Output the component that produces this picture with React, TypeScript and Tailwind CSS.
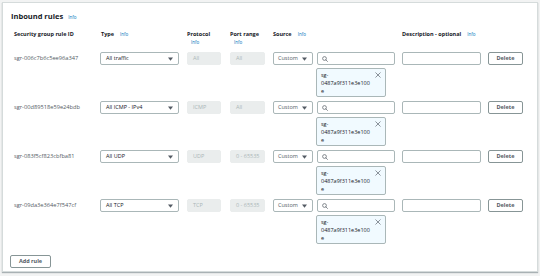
import React from 'react';

const rules = [
  { id: 'sgr-006c7b6c5ee96a347', type: 'All traffic', protocol: 'All', port: 'All' },
  { id: 'sgr-00d89518e59e24bdb', type: 'All ICMP - IPv4', protocol: 'ICMP', port: 'All' },
  { id: 'sgr-083f5cf823cbfba81', type: 'All UDP', protocol: 'UDP', port: '0 - 65535' },
  { id: 'sgr-09da3e364e7f547cf', type: 'All TCP', protocol: 'TCP', port: '0 - 65535' },
];

function Info() {
  return <span className="text-[4.5px] text-[#0073bb] font-normal">Info</span>;
}

function Caret() {
  return (
    <svg width="5" height="4" viewBox="0 0 5 4" className="shrink-0">
      <path d="M0 0.5h5L2.5 3.8z" fill="#545b64" />
    </svg>
  );
}

function SearchIcon() {
  return (
    <svg width="6" height="6" viewBox="0 0 12 12" className="shrink-0">
      <circle cx="5" cy="5" r="3.8" fill="none" stroke="#545b64" strokeWidth="1.4" />
      <path d="M7.8 7.8l3.2 3.2" stroke="#545b64" strokeWidth="1.4" strokeLinecap="round" />
    </svg>
  );
}

function CloseIcon() {
  return (
    <svg width="6" height="6" viewBox="0 0 12 12" className="shrink-0">
      <path d="M1.5 1.5l9 9M10.5 1.5l-9 9" stroke="#545b64" strokeWidth="1.3" strokeLinecap="round" />
    </svg>
  );
}

function Row({ id, type, protocol, port }: { id: string; type: string; protocol: string; port: string }) {
  return (
    <div className="flex items-start h-[49px]">
      <div className="w-[86px] pt-[2px] text-[5.7px] leading-[8px] text-[#545b64]">{id}</div>
      <div className="w-[79px] h-[13px] flex items-center justify-between pl-[5px] pr-[5px] border border-[#aab7b8] rounded-[2px] text-[5.5px] text-[#16191f]">
        <span>{type}</span>
        <Caret />
      </div>
      <div className="ml-[8px] w-[34px] h-[13px] flex items-center pl-[5px] bg-[#eaeded] border border-[#eaeded] rounded-[2px] text-[5.5px] text-[#aab7b8]">
        {protocol}
      </div>
      <div className="ml-[9px] w-[35px] h-[13px] flex items-center pl-[5px] bg-[#eaeded] border border-[#eaeded] rounded-[2px] text-[5.5px] text-[#aab7b8]">
        {port}
      </div>
      <div className="ml-[8px] flex flex-col">
        <div className="flex">
          <div className="w-[40px] h-[13px] flex items-center justify-between pl-[4px] pr-[5px] border border-[#aab7b8] rounded-[2px] text-[5.5px] text-[#545b64]">
            <span>Custom</span>
            <Caret />
          </div>
          <div className="ml-[4px] w-[78px] h-[13px] flex items-center pl-[4px] border border-[#aab7b8] rounded-[2px]">
            <SearchIcon />
          </div>
        </div>
        <div className="ml-[43px] mt-[3px] w-[70px] h-[29px] flex justify-between pl-[4px] pr-[4px] pt-[2px] bg-[#f1faff] border border-[#aab7b8] rounded-[2px] text-[5.5px] leading-[8px] text-[#16191f]">
          <span>sg-<br />0487a9f311e3e100<br />e</span>
          <div className="pt-[1px]"><CloseIcon /></div>
        </div>
      </div>
      <div className="ml-[7px] w-[79px] h-[13px] border border-[#aab7b8] rounded-[2px]" />
      <div className="ml-[7px] w-[35px] h-[13px] flex items-center justify-center border border-[#879596] rounded-[2px] text-[5.5px] font-bold text-[#545b64]">
        Delete
      </div>
    </div>
  );
}

export default function App() {
  return (
    <div className="w-[540px] h-[276px] bg-[#f2f3f3] pt-[2px] pl-[2px]" style={{ fontFamily: '"Open Sans", "Noto Sans", sans-serif' }}>
      <div className="w-[536px] h-[270px] bg-white border border-[#d5dbdb] shadow-[0_1px_1px_rgba(0,28,36,0.3)]">
        {/* Header */}
        <div className="flex items-center gap-[5px] pl-[8px] pt-[8px] h-[20px]">
          <span className="text-[7.5px] font-bold text-[#16191f]">Inbound rules</span>
          <Info />
        </div>

        {/* Column headers */}
        <div className="flex items-start pl-[11px] pt-[7px] h-[29px] text-[5.5px] font-bold text-[#16191f] leading-[8px]">
          <div className="w-[86px]">Security group rule ID</div>
          <div className="w-[79px] flex gap-[6px] pl-[1px]">
            <span>Type</span>
            <Info />
          </div>
          <div className="ml-[8px] w-[34px] flex flex-col">
            <span>Protocol</span>
            <span className="pl-[4px]"><Info /></span>
          </div>
          <div className="ml-[9px] w-[35px] flex flex-col">
            <span className="whitespace-nowrap">Port range</span>
            <span className="pl-[4px]"><Info /></span>
          </div>
          <div className="ml-[8px] w-[122px] flex gap-[6px]">
            <span>Source</span>
            <Info />
          </div>
          <div className="ml-[7px] flex gap-[6px] whitespace-nowrap">
            <span>Description - optional</span>
            <Info />
          </div>
        </div>

        {/* Rows */}
        <div className="pl-[11px]">
          {rules.map((r) => (
            <Row key={r.id} {...r} />
          ))}
        </div>

        {/* Add rule */}
        <div className="pl-[7px] pt-[7px]">
          <div className="w-[41px] h-[13px] flex items-center justify-center border border-[#879596] rounded-[2px] text-[5.5px] font-bold text-[#545b64]">
            Add rule
          </div>
        </div>
      </div>
    </div>
  );
}
